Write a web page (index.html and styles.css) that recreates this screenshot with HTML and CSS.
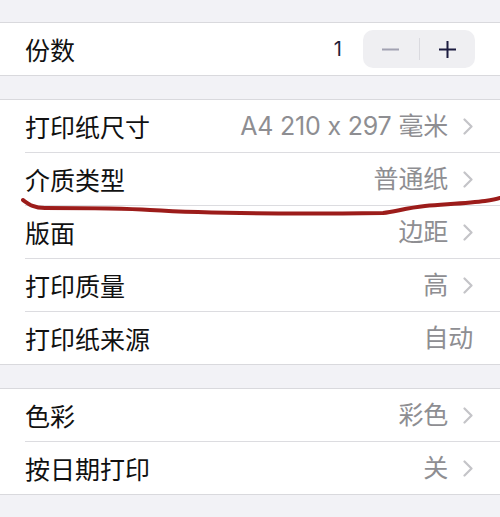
FILE: index.html
```html
<!DOCTYPE html>
<html lang="zh">
<head>
<meta charset="utf-8">
<link rel="stylesheet" href="styles.css">
</head>
<body>
<div class="page">
  <div class="gap gap-top"></div>
  <div class="group">
    <div class="row">
      <span class="label">份数</span>
      <div class="copies">
        <span class="count">1</span>
        <div class="stepper">
          <span class="step minus"><svg width="17" height="3" viewBox="0 0 17 3"><line x1="0.5" y1="1.5" x2="16.5" y2="1.5" stroke="#a2a2b2" stroke-width="2" stroke-linecap="round"/></svg></span>
          <span class="divider"></span>
          <span class="step plus"><svg width="17" height="17" viewBox="0 0 17 17"><line x1="0.5" y1="8.5" x2="16.5" y2="8.5" stroke="#1b1b3f" stroke-width="2" stroke-linecap="round"/><line x1="8.5" y1="0.5" x2="8.5" y2="16.5" stroke="#1b1b3f" stroke-width="2" stroke-linecap="round"/></svg></span>
        </div>
      </div>
    </div>
  </div>
  <div class="gap"></div>
  <div class="group">
    <div class="row"><span class="label">打印纸尺寸</span><span class="value">A4 210 x 297 毫米</span><span class="chev"><svg width="10" height="17" viewBox="0 0 10 17"><polyline points="1.5,1.5 8.5,8.5 1.5,15.5" fill="none" stroke="#c4c4c8" stroke-width="2.2" stroke-linecap="round" stroke-linejoin="round"/></svg></span></div>
    <div class="sep"></div>
    <div class="row"><span class="label">介质类型</span><span class="value">普通纸</span><span class="chev"><svg width="10" height="17" viewBox="0 0 10 17"><polyline points="1.5,1.5 8.5,8.5 1.5,15.5" fill="none" stroke="#c4c4c8" stroke-width="2.2" stroke-linecap="round" stroke-linejoin="round"/></svg></span></div>
    <div class="sep"></div>
    <div class="row"><span class="label">版面</span><span class="value">边距</span><span class="chev"><svg width="10" height="17" viewBox="0 0 10 17"><polyline points="1.5,1.5 8.5,8.5 1.5,15.5" fill="none" stroke="#c4c4c8" stroke-width="2.2" stroke-linecap="round" stroke-linejoin="round"/></svg></span></div>
    <div class="sep"></div>
    <div class="row"><span class="label">打印质量</span><span class="value">高</span><span class="chev"><svg width="10" height="17" viewBox="0 0 10 17"><polyline points="1.5,1.5 8.5,8.5 1.5,15.5" fill="none" stroke="#c4c4c8" stroke-width="2.2" stroke-linecap="round" stroke-linejoin="round"/></svg></span></div>
    <div class="sep"></div>
    <div class="row"><span class="label">打印纸来源</span><span class="value">自动</span></div>
  </div>
  <div class="gap"></div>
  <div class="group">
    <div class="row"><span class="label">色彩</span><span class="value">彩色</span><span class="chev"><svg width="10" height="17" viewBox="0 0 10 17"><polyline points="1.5,1.5 8.5,8.5 1.5,15.5" fill="none" stroke="#c4c4c8" stroke-width="2.2" stroke-linecap="round" stroke-linejoin="round"/></svg></span></div>
    <div class="sep"></div>
    <div class="row"><span class="label">按日期打印</span><span class="value">关</span><span class="chev"><svg width="10" height="17" viewBox="0 0 10 17"><polyline points="1.5,1.5 8.5,8.5 1.5,15.5" fill="none" stroke="#c4c4c8" stroke-width="2.2" stroke-linecap="round" stroke-linejoin="round"/></svg></span></div>
  </div>
  <svg class="ink" width="500" height="517" viewBox="0 0 500 517">
    <path d="M23 200 C 30 205, 34 208, 45 208 C 80 208, 120 208, 150 210 C 200 213, 300 214, 383 213 C 395 212, 405 208, 425 206 C 450 204, 470 203, 485 201 C 492 200, 497 199, 500 198" fill="none" stroke="#9c1c1a" stroke-width="4" stroke-linecap="round"/>
  </svg>
</div>
</body>
</html>
```

FILE: styles.css
```css
html, body {
  margin: 0;
  padding: 0;
  background: #f2f2f6;
}
.page {
  position: relative;
  width: 500px;
  height: 517px;
  overflow: hidden;
  font-family: "Noto Sans CJK SC", "Noto Sans", sans-serif;
}
.gap {
  height: 23px;
}
.gap-top {
  height: 22px;
}
.group {
  background: #ffffff;
  border-top: 1px solid #d9d9dd;
  border-bottom: 1px solid #d9d9dd;
}
.row {
  height: 52px;
  display: flex;
  align-items: center;
  padding: 0 27px 0 25px;
}
.label {
  flex: 1;
  font-size: 25px;
  color: #111111;
  line-height: 1;
}
.value {
  font-family: "Inter", "Noto Sans CJK SC", sans-serif;
  font-feature-settings: "calt" 0;
  font-size: 25px;
  letter-spacing: -0.2px;
  color: #8e8e92;
  line-height: 1;
}
.chev {
  display: flex;
  margin-left: 15px;
}
.sep {
  height: 1px;
  margin-left: 25px;
  background: #dcdce0;
}
.copies {
  display: flex;
  align-items: center;
  margin-right: -2px;
}
.count {
  font-family: "Inter", sans-serif;
  font-size: 20px;
  color: #1d1d38;
  margin-right: 21px;
}
.stepper {
  width: 112px;
  height: 38px;
  border-radius: 10px;
  background: #efeff2;
  display: flex;
  align-items: center;
}
.step {
  flex: 1;
  display: flex;
  justify-content: center;
  align-items: center;
}
.divider {
  width: 1px;
  height: 22px;
  background: #dadadf;
}
.ink {
  position: absolute;
  left: 0;
  top: 0;
  pointer-events: none;
}
```
